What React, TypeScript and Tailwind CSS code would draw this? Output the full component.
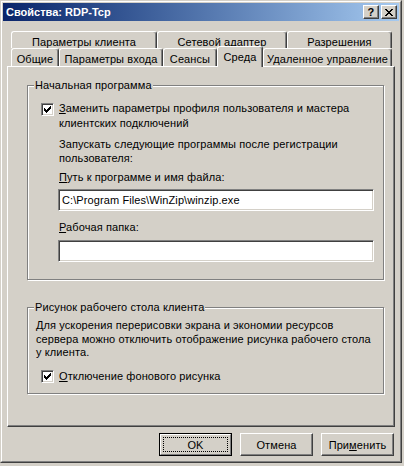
import React from "react";

function CheckMark() {
  const cols = [2, 3, 4, 3, 2, 1, 0];
  return (
    <svg width="7" height="7" viewBox="0 0 7 7" shapeRendering="crispEdges">
      {cols.map((r, i) => (
        <rect key={i} x={i} y={r} width="1" height="3" fill="#000" />
      ))}
    </svg>
  );
}

function CloseGlyph() {
  const rows = [
    [0, 1, 6, 7],
    [1, 2, 5, 6],
    [2, 3, 4, 5],
    [3, 4],
    [2, 3, 4, 5],
    [1, 2, 5, 6],
    [0, 1, 6, 7],
  ];
  return (
    <svg width="8" height="7" viewBox="0 0 8 7" shapeRendering="crispEdges">
      {rows.map((xs, y) =>
        xs.map((x) => <rect key={`${x}-${y}`} x={x} y={y} width="1" height="1" fill="#000" />)
      )}
    </svg>
  );
}

function Checkbox() {
  return (
    <div className="w-[13px] h-[13px] shrink-0 bg-white border border-t-[#808080] border-l-[#808080] border-b-white border-r-white shadow-[inset_1px_1px_0_#404040,inset_-1px_-1px_0_#d4d0c8] flex items-center justify-center">
      <CheckMark />
    </div>
  );
}

function TitleButton({ children }: { children: React.ReactNode }) {
  return (
    <div className="w-[16px] h-[14px] bg-[#d4d0c8] border border-t-white border-l-white border-b-[#404040] border-r-[#404040] shadow-[inset_-1px_-1px_0_#808080] flex items-center justify-center text-black font-bold text-[11px] leading-none">
      {children}
    </div>
  );
}

export default function App() {
  const tabBase =
    "h-full bg-[#d4d0c8] border-t border-l border-r border-t-white border-l-white border-r-[#404040] rounded-t-[3px] shadow-[inset_-1px_0_0_#808080] pt-[3px] text-center leading-[14px] whitespace-nowrap";
  return (
    <div className="w-[404px] h-[466px] bg-[#d4d0c8] font-['Liberation_Sans',Arial,sans-serif] text-[11px] tracking-[0.1px] text-black">
      <div className="w-[402px] h-[463px] border border-t-[#d4d0c8] border-l-[#d4d0c8] border-b-[#404040] border-r-[#404040]">
        <div className="h-full border border-t-white border-l-white border-b-[#808080] border-r-[#808080] p-[1px] flex flex-col">
          {/* Title bar */}
          <div className="h-[18px] shrink-0 bg-linear-to-r from-[#0a246a] to-[#a6caf0] flex items-center pl-[3px] pr-[2px]">
            <span className="text-white font-bold text-[11px] tracking-normal leading-[14px]">Свойства: RDP-Tcp</span>
            <div className="ml-auto flex gap-[2px]">
              <TitleButton>?</TitleButton>
              <TitleButton>
                <CloseGlyph />
              </TitleButton>
            </div>
          </div>

          {/* Tabs + panel */}
          <div className="px-[4px] pt-[10px]">
            <div className="ml-[4px] flex h-[17px]">
              <div className={`${tabBase} w-[146px]`}>Параметры клиента</div>
              <div className={`${tabBase} w-[130px]`}>Сетевой адаптер</div>
              <div className={`${tabBase} w-[105px]`}>Разрешения</div>
            </div>
            <div className="ml-[4px] flex h-[18px] items-start">
              <div className={`${tabBase} w-[48px]`}>Общие</div>
              <div className={`${tabBase} w-[104px]`}>Параметры входа</div>
              <div className={`${tabBase} w-[54px]`}>Сеансы</div>
              <div className="relative z-10 w-[46px] h-[21px] -mt-[2px] bg-[#d4d0c8] border-t border-l border-r border-t-white border-l-white border-r-[#404040] rounded-t-[3px] shadow-[inset_-1px_0_0_#808080] pt-[3px] text-center leading-[14px] whitespace-nowrap">
                Среда
              </div>
              <div className={`${tabBase} w-[129px]`}>Удаленное управление</div>
            </div>

            <div className="h-[361px] border border-t-white border-l-white border-b-[#404040] border-r-[#404040] shadow-[inset_-1px_-1px_0_#808080] pt-[18px]">
              {/* Group 1 */}
              <div className="ml-[19px] w-[357px] h-[195px] border border-[#808080] shadow-[inset_1px_1px_0_#fff,1px_1px_0_#fff] flex flex-col">
                <div className="-mt-[8px] ml-[6px] px-[1px] w-fit bg-[#d4d0c8] leading-[14px] whitespace-nowrap">
                  Начальная программа
                </div>
                <div className="mt-[9px] ml-[13px] flex items-start gap-[5px]">
                  <div className="mt-[2px]">
                    <Checkbox />
                  </div>
                  <div className="leading-[15px] whitespace-nowrap">
                    <span className="underline">З</span>аменить параметры профиля пользователя и мастера
                    <br />
                    клиентских подключений
                  </div>
                </div>
                <div className="mt-[6px] ml-[31px] leading-[14px] whitespace-nowrap">
                  Запускать следующие программы после регистрации
                  <br />
                  пользователя:
                </div>
                <div className="mt-[5px] ml-[31px] leading-[14px] whitespace-nowrap">
                  <span className="underline">П</span>уть к программе и имя файла:
                </div>
                <div className="mt-[5px] ml-[30px] w-[316px] h-[22px] bg-white border border-t-[#808080] border-l-[#808080] border-b-white border-r-white shadow-[inset_1px_1px_0_#404040,inset_-1px_-1px_0_#d4d0c8] flex items-center pl-[3px] leading-[14px] whitespace-nowrap">
                  {"C:\\Program Files\\WinZip\\winzip.exe"}
                </div>
                <div className="mt-[9px] ml-[31px] leading-[14px] whitespace-nowrap">
                  <span className="underline">Р</span>абочая папка:
                </div>
                <div className="mt-[6px] ml-[30px] w-[316px] h-[22px] bg-white border border-t-[#808080] border-l-[#808080] border-b-white border-r-white shadow-[inset_1px_1px_0_#404040,inset_-1px_-1px_0_#d4d0c8]" />
              </div>

              {/* Group 2 */}
              <div className="mt-[27px] ml-[19px] w-[357px] h-[87px] border border-[#808080] shadow-[inset_1px_1px_0_#fff,1px_1px_0_#fff] flex flex-col">
                <div className="-mt-[8px] ml-[6px] px-[1px] w-fit bg-[#d4d0c8] leading-[14px] whitespace-nowrap">
                  Рисунок рабочего стола клиента
                </div>
                <div className="mt-[5px] ml-[8px] leading-[13.5px] whitespace-nowrap">
                  Для ускорения перерисовки экрана и экономии ресурсов
                  <br />
                  сервера можно отключить отображение рисунка рабочего стола
                  <br />
                  у клиента.
                </div>
                <div className="mt-[9px] ml-[13px] flex items-start gap-[5px]">
                  <div className="mt-[1px]">
                    <Checkbox />
                  </div>
                  <div className="leading-[14px] whitespace-nowrap">
                    <span className="underline">О</span>тключение фонового рисунка
                  </div>
                </div>
              </div>
            </div>
          </div>

          {/* Buttons */}
          <div className="mt-[6px] flex justify-end gap-[8px] pr-[5px]">
            <div className="w-[73px] h-[23px] border border-black">
              <div className="h-full border border-t-white border-l-white border-b-[#808080] border-r-[#808080] p-[2px]">
                <div className="w-full h-full border border-dotted border-black flex items-center justify-center leading-[14px]">
                  OK
                </div>
              </div>
            </div>
            <div className="w-[73px] h-[23px] border border-t-white border-l-white border-b-[#404040] border-r-[#404040] shadow-[inset_-1px_-1px_0_#808080] flex items-center justify-center leading-[14px]">
              Отмена
            </div>
            <div className="w-[73px] h-[23px] border border-t-white border-l-white border-b-[#404040] border-r-[#404040] shadow-[inset_-1px_-1px_0_#808080] flex items-center justify-center leading-[14px]">
              <span>
                При<span className="underline">м</span>енить
              </span>
            </div>
          </div>
        </div>
      </div>
    </div>
  );
}
